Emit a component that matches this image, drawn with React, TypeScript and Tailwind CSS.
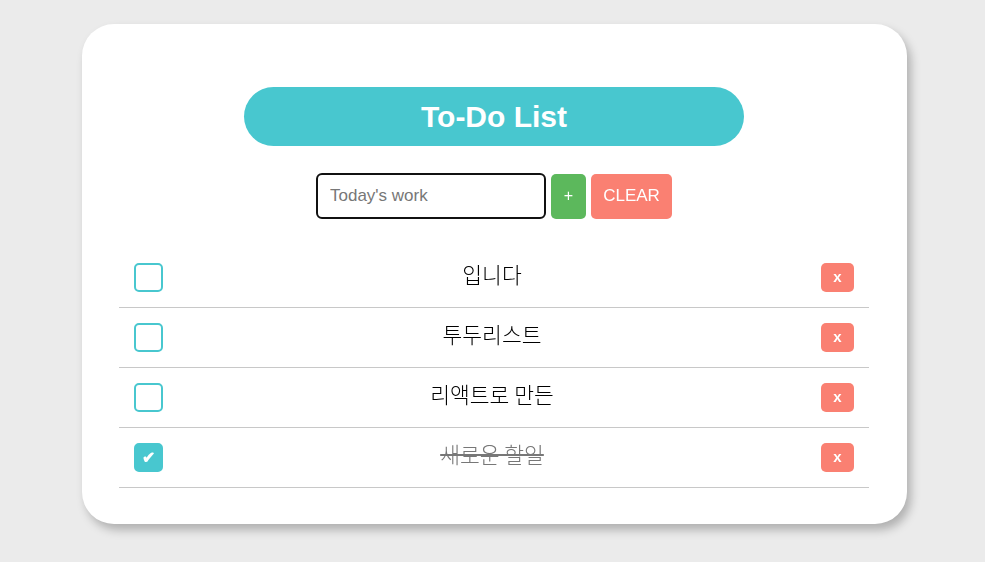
import { useState } from "react";

type Todo = { id: number; text: string; done: boolean };

const INITIAL: Todo[] = [
  { id: 1, text: "입니다", done: false },
  { id: 2, text: "투두리스트", done: false },
  { id: 3, text: "리액트로 만든", done: false },
  { id: 4, text: "새로운 할일", done: true },
];

const FONT = { fontFamily: '"Liberation Sans", Arial, "Noto Sans CJK KR", sans-serif' };

export default function App() {
  const [todos, setTodos] = useState<Todo[]>(INITIAL);
  const [value, setValue] = useState("");

  const add = () => {
    if (!value.trim()) return;
    setTodos([...todos, { id: Date.now(), text: value, done: false }]);
    setValue("");
  };

  return (
    <div className="min-h-[562px] bg-[#ebebeb] pt-[24px]" style={FONT}>
      <div className="ml-[82px] w-[825px] h-[500px] rounded-[32px] bg-white pt-[63px] pl-[37px] pr-[38px] shadow-[4px_6px_10px_rgba(0,0,0,0.25)]">
        <h1 className="mx-auto flex h-[59px] w-[500px] items-center justify-center rounded-full bg-[#48c7cf] text-[30px] font-bold text-white">
          To-Do List
        </h1>

        <div className="mt-[27px] flex items-center justify-center gap-[5px]">
          <input
            autoFocus
            value={value}
            onChange={(e) => setValue(e.target.value)}
            placeholder="Today's work"
            className="h-[46px] w-[230px] rounded-[6px] border-2 border-[#111] px-[12px] text-[17px] text-black outline-none placeholder:text-[#777]"
          />
          <button onClick={add} className="h-[45px] w-[35px] rounded-[5px] bg-[#5cb85c] text-[16px] text-white">
            +
          </button>
          <button onClick={() => setTodos([])} className="h-[45px] w-[81px] rounded-[5px] bg-[#fa8072] text-[17px] text-white">
            CLEAR
          </button>
        </div>

        <ul className="mt-[29px]">
          {todos.map((t) => (
            <li key={t.id} className="flex h-[60px] items-center border-b border-[#c8c8c8] px-[15px]">
              <button
                onClick={() => setTodos(todos.map((x) => (x.id === t.id ? { ...x, done: !x.done } : x)))}
                className={`flex h-[29px] w-[29px] items-center justify-center rounded-[5px] border-2 border-[#48c7cf] text-[16px] font-bold leading-none text-white ${t.done ? "bg-[#48c7cf]" : "bg-white"}`}
              >
                {t.done ? "✔" : ""}
              </button>
              <span
                className={`flex-1 pb-[7px] text-center text-[21.5px] ${t.done ? "text-[#777] line-through" : "text-black"}`}
                style={{ fontFamily: '"Noto Sans CJK KR", "Liberation Sans", sans-serif', fontWeight: 300 }}
              >
                {t.text}
              </span>
              <button
                onClick={() => setTodos(todos.filter((x) => x.id !== t.id))}
                className="h-[29px] w-[33px] rounded-[5px] bg-[#fa8072] text-[15px] font-bold text-white"
              >
                x
              </button>
            </li>
          ))}
        </ul>
      </div>
    </div>
  );
}
